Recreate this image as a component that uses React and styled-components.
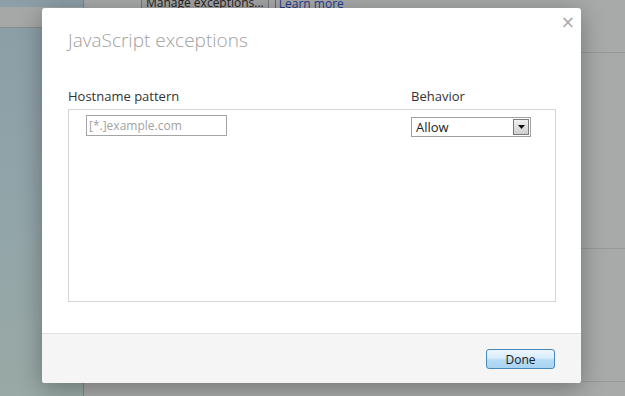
import React from 'react';
import styled, { createGlobalStyle } from 'styled-components';

const GlobalStyle = createGlobalStyle`
  html, body {
    margin: 0;
    padding: 0;
    width: 625px;
    height: 396px;
    overflow: hidden;
  }
  body {
    font-family: "Open Sans", "Noto Sans", sans-serif;
  }
`;

const Page = styled.div`
  position: relative;
  width: 625px;
  height: 396px;
  display: flex;
  overflow: hidden;
`;

const Sidebar = styled.div`
  width: 83px;
  display: flex;
  flex-direction: column;
  background: linear-gradient(180deg, #8b9ea7 0%, #92a5a9 55%, #99a9a5 100%);
  border-right: 1px solid #7f8585;
`;

const SideTop = styled.div`
  height: 7px;
  background: #8c9ea7;
`;

const SideTab = styled.div`
  height: 20px;
  background: #a6a7a7;
  border-bottom: 1px solid #878b8c;
`;

const Main = styled.div`
  flex: 1;
  display: flex;
  flex-direction: column;
  background: #a8aaaa;
`;

const TopRow = styled.div`
  height: 10px;
  display: flex;
  align-items: flex-end;
  gap: 6px;
  padding-left: 57px;
  font-size: 12px;
  line-height: 12px;
  overflow: hidden;
`;

const PageButton = styled.div`
  height: 20px;
  margin-top: -10px;
  padding: 0 4px;
  border: 1px solid #767676;
  background: #a4a4a4;
  color: #222;
  display: flex;
  align-items: flex-end;
`;

const PageLink = styled.div`
  color: #233c8c;
  border-left: 1px solid #5a5fa0;
  padding-left: 3px;
`;

const Section = styled.div`
  height: ${p => p.h}px;
  border-bottom: 1px solid #979999;
`;

const Overlay = styled.div`
  position: absolute;
  left: 42px;
  top: 8px;
  width: 539px;
  height: 375px;
  background: #fff;
  border-radius: 3px;
  box-shadow: 0 5px 24px rgba(0, 0, 0, 0.32);
  display: flex;
  flex-direction: column;
  overflow: hidden;
`;

const Close = styled.div`
  position: absolute;
  right: 6px;
  top: 4px;
  font-size: 17px;
  color: #a8a8a8;
  font-family: "DejaVu Sans", sans-serif;
`;

const Title = styled.h1`
  margin: 0;
  padding: 19px 0 0 26px;
  font-size: 19px;
  font-weight: 300;
  line-height: 26px;
  color: #a0a0a0;
`;

const Body = styled.div`
  flex: 1;
  padding: 34px 25px 0 26px;
`;

const Headers = styled.div`
  display: flex;
  font-size: 13px;
  line-height: 18px;
  color: #333;
  height: 22px;
`;

const HeadCell = styled.div`
  width: ${p => p.w}px;
`;

const List = styled.div`
  height: 193px;
  border: 1px solid #d6d6d6;
  display: flex;
  align-items: flex-start;
  padding-top: 5px;
  box-sizing: border-box;
`;

const Input = styled.div`
  margin-left: 17px;
  width: 141px;
  height: 21px;
  box-sizing: border-box;
  border: 1px solid #a5a5a5;
  font-size: 12px;
  line-height: 19px;
  padding-left: 2px;
  color: #a2a2a2;
`;

const Select = styled.div`
  margin-left: 184px;
  margin-top: 2px;
  width: 120px;
  height: 20px;
  box-sizing: border-box;
  border: 1px solid #a0a0a0;
  display: flex;
  font-size: 13px;
  line-height: 18px;
  color: #222;
`;

const SelectText = styled.div`
  flex: 1;
  padding-left: 4px;
`;

const Arrow = styled.div`
  width: 16px;
  margin: 1px;
  box-sizing: border-box;
  border: 1px solid #7a7a7a;
  background: linear-gradient(180deg, #f0f0f0, #cfcfcf);
  display: flex;
  align-items: center;
  justify-content: center;
`;

const Footer = styled.div`
  height: 50px;
  border-top: 1px solid #e0e0e0;
  background: #f5f5f5;
  display: flex;
  justify-content: flex-end;
  align-items: flex-start;
  padding: 15px 26px 0 0;
  box-sizing: border-box;
`;

const DoneButton = styled.button`
  width: 69px;
  height: 20px;
  border: 1px solid #4a86b8;
  border-radius: 3px;
  background: linear-gradient(180deg, #edf6fd 0%, #d7ecfb 45%, #b6dcf5 55%, #a9d4f2 100%);
  font-family: "Open Sans", "Noto Sans", sans-serif;
  font-size: 12px;
  color: #1a1a1a;
  padding: 0;
  line-height: 17px;
`;

export default function App() {
  return (
    <>
      <GlobalStyle />
      <Page>
        <Sidebar>
          <SideTop />
          <SideTab />
        </Sidebar>
        <Main>
          <TopRow>
            <PageButton>Manage exceptions...</PageButton>
            <PageLink>Learn more</PageLink>
          </TopRow>
          <Section h={42} />
          <Section h={195} />
          <Section h={132} />
        </Main>
        <Overlay>
          <Close>×</Close>
          <Title>JavaScript exceptions</Title>
          <Body>
            <Headers>
              <HeadCell w={343}>Hostname pattern</HeadCell>
              <HeadCell w={120}>Behavior</HeadCell>
            </Headers>
            <List>
              <Input>[*.]example.com</Input>
              <Select>
                <SelectText>Allow</SelectText>
                <Arrow>
                  <svg width="7" height="4" viewBox="0 0 7 4">
                    <path d="M0 0 L7 0 L3.5 4 Z" fill="#111" />
                  </svg>
                </Arrow>
              </Select>
            </List>
          </Body>
          <Footer>
            <DoneButton>Done</DoneButton>
          </Footer>
        </Overlay>
      </Page>
    </>
  );
}
